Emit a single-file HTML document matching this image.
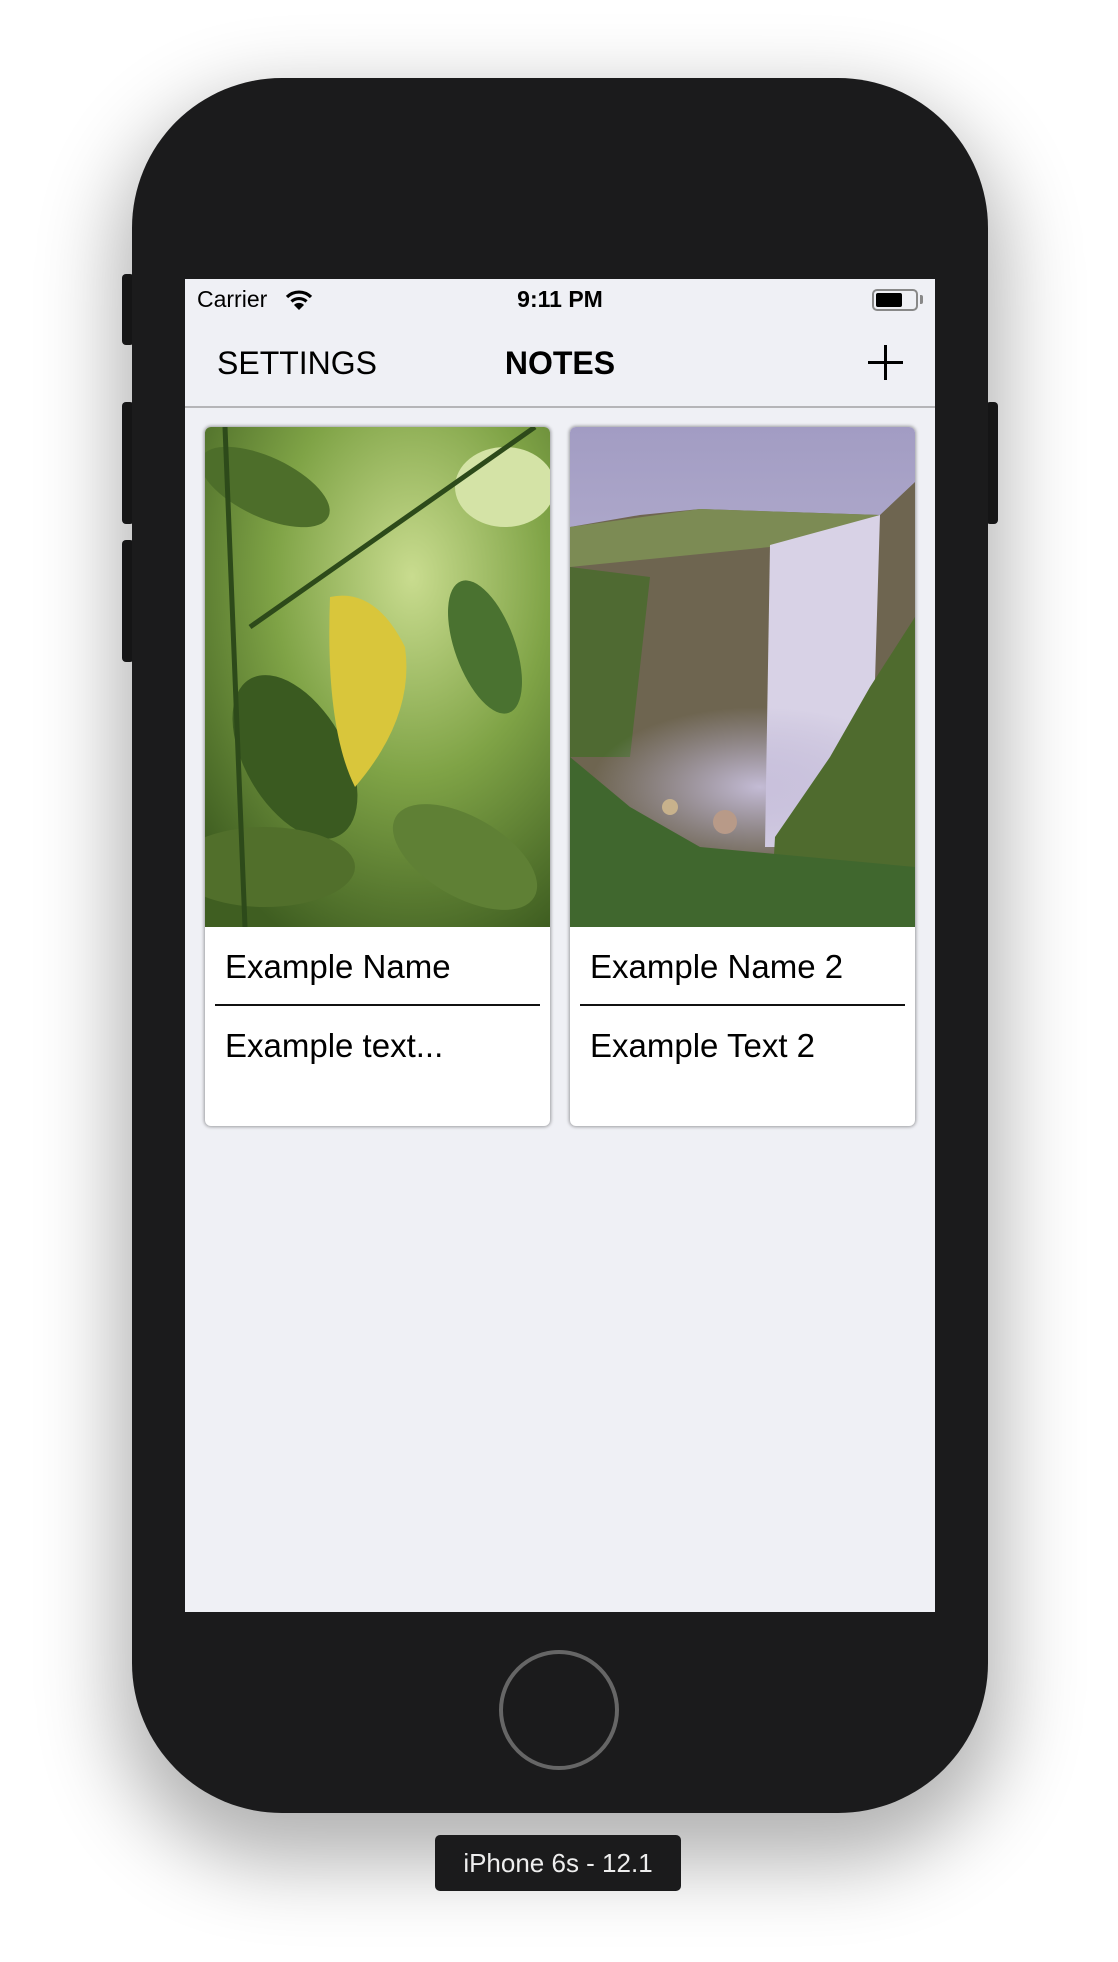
<!DOCTYPE html>
<html><head><meta charset="utf-8"><style>
*{margin:0;padding:0;box-sizing:border-box}
body{width:1118px;height:1962px;background:#fff;position:relative;overflow:hidden;font-family:"Liberation Sans",sans-serif}
.phone{position:absolute;left:132px;top:78px;width:856px;height:1735px;background:#1b1b1c;border-radius:150px;box-shadow:0 35px 80px 15px rgba(0,0,0,.3)}
.btn{position:absolute;background:#1b1b1c;border-radius:4px}
.screen{position:absolute;left:185px;top:279px;width:750px;height:1333px;background:#eff0f5;overflow:hidden}
.abs{position:absolute}
.card{position:absolute;top:148px;width:345px;height:699px;background:#fff;border-radius:6px;box-shadow:0 0 3px 1px rgba(0,0,0,.35);overflow:hidden}
.card svg{display:block}
.t{position:absolute;left:20px;font-size:33px;color:#000}
.ln{position:absolute;left:10px;right:10px;top:577px;height:2px;background:#111}
</style></head><body>
<div class="btn" style="left:122px;top:274px;width:12px;height:71px"></div>
<div class="btn" style="left:122px;top:402px;width:12px;height:122px"></div>
<div class="btn" style="left:122px;top:540px;width:12px;height:122px"></div>
<div class="btn" style="left:986px;top:402px;width:12px;height:122px"></div>
<div class="phone"></div>
<div class="abs" style="left:499px;top:1650px;width:120px;height:120px;border:4px solid #666;border-radius:50%"></div>
<div class="abs" style="left:435px;top:1835px;width:246px;height:56px;background:#1b1b1c;border-radius:5px;color:#eee;font-size:26px;text-align:center;line-height:56px">iPhone 6s - 12.1</div>
<div class="screen">
 <div class="abs" style="left:12px;top:7px;font-size:23px">Carrier</div>
 <svg class="abs" style="left:100px;top:10px" width="28" height="22" viewBox="0 0 28 22"><path d="M2 8 A17 17 0 0 1 26 8" stroke="#000" stroke-width="3.2" fill="none"/><path d="M6.5 12.5 A11 11 0 0 1 21.5 12.5" stroke="#000" stroke-width="3.2" fill="none"/><path d="M14 21 L9 16 A7 7 0 0 1 19 16 Z" fill="#000"/></svg>
 <div class="abs" style="left:0;width:750px;text-align:center;top:7px;font-size:23px;font-weight:bold">9:11 PM</div>
 <div class="abs" style="left:687px;top:10px;width:46px;height:22px;border:2px solid #888;border-radius:5px"><div style="margin:2px;width:26px;height:14px;background:#000;border-radius:2px"></div></div>
 <div class="abs" style="left:735px;top:16px;width:3px;height:9px;background:#888;border-radius:0 2px 2px 0"></div>
 <div class="abs" style="left:32px;top:66px;font-size:32px">SETTINGS</div>
 <div class="abs" style="left:0;width:750px;text-align:center;top:66px;font-size:32px;font-weight:bold">NOTES</div>
 <div class="abs" style="left:683px;top:82px;width:35px;height:3px;background:#000"></div>
 <div class="abs" style="left:699px;top:66px;width:3px;height:35px;background:#000"></div>
 <div class="abs" style="left:0;top:127px;width:750px;height:2px;background:#b5b5b8"></div>
 <div class="card" style="left:20px">
  <svg width="345" height="500" viewBox="0 0 345 500">
   <defs><radialGradient id="g1" cx=".6" cy=".3" r=".8"><stop offset="0" stop-color="#c9dc8f"/><stop offset=".5" stop-color="#7fa346"/><stop offset="1" stop-color="#3f5e21"/></radialGradient></defs>
   <rect width="345" height="500" fill="url(#g1)"/>
   <ellipse cx="60" cy="60" rx="70" ry="30" fill="#4d6e2a" transform="rotate(25 60 60)"/>
   <ellipse cx="280" cy="220" rx="30" ry="70" fill="#4a7230" transform="rotate(-20 280 220)"/>
   <ellipse cx="90" cy="330" rx="50" ry="90" fill="#3a5a20" transform="rotate(-30 90 330)"/>
   <ellipse cx="60" cy="440" rx="90" ry="40" fill="#516f2b"/>
   <ellipse cx="260" cy="430" rx="80" ry="40" fill="#5f8035" transform="rotate(30 260 430)"/>
   <ellipse cx="300" cy="60" rx="50" ry="40" fill="#d4e3a6"/>
   <path d="M20 0 L40 500 M45 200 L330 0" stroke="#2d4a1a" stroke-width="5"/>
   <path d="M125 170 Q170 160 200 220 Q210 290 150 360 Q120 300 125 170Z" fill="#d9c63b"/>
  </svg>
  <div class="t" style="top:521px">Example Name</div>
  <div class="ln"></div>
  <div class="t" style="top:600px">Example text...</div>
 </div>
 <div class="card" style="left:385px">
  <svg width="345" height="500" viewBox="0 0 345 500">
   <defs><linearGradient id="sk" x1="0" y1="0" x2="0" y2="1"><stop offset="0" stop-color="#a29cc3"/><stop offset="1" stop-color="#d4d0e3"/></linearGradient>
   <radialGradient id="mist" cx=".5" cy=".5" r=".5"><stop offset="0" stop-color="#c8c0dc" stop-opacity=".95"/><stop offset="1" stop-color="#b8afd0" stop-opacity="0"/></radialGradient></defs>
   <rect width="345" height="500" fill="url(#sk)"/>
   <path d="M0 100 L70 88 L130 82 L310 88 L345 55 L345 500 L0 500Z" fill="#6e6550"/>
   <path d="M0 100 L130 82 L310 88 L200 120 L0 140Z" fill="#7c8b54"/>
   <path d="M0 140 L80 150 L60 330 L0 330Z" fill="#4f6a32"/>
   <path d="M200 118 L310 88 L300 420 L195 420Z" fill="#d8d2e6"/>
   <ellipse cx="190" cy="360" rx="170" ry="80" fill="url(#mist)"/>
   <path d="M345 190 L300 260 L260 330 L205 410 L200 500 L345 500Z" fill="#4f6b2e"/>
   <path d="M0 330 L60 380 L130 420 L345 440 L345 500 L0 500Z" fill="#40672e"/>
   <circle cx="100" cy="380" r="8" fill="#c8b28c"/><circle cx="155" cy="395" r="12" fill="#b89a88"/>
  </svg>
  <div class="t" style="top:521px">Example Name 2</div>
  <div class="ln"></div>
  <div class="t" style="top:600px">Example Text 2</div>
 </div>
</div>
</body></html>
